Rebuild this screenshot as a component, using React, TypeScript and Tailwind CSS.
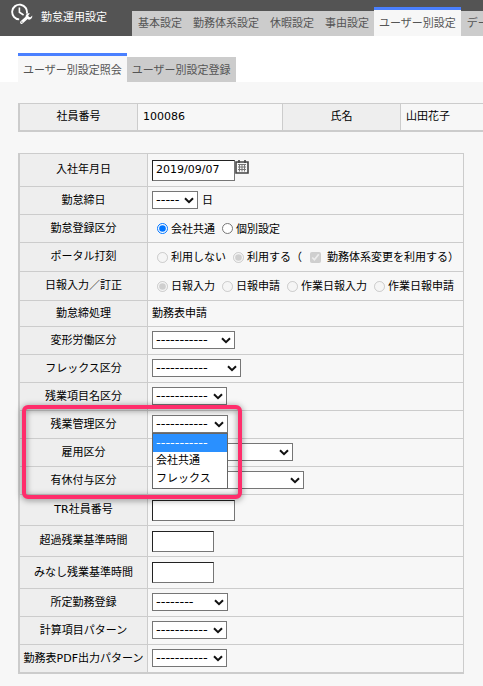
import type { ReactNode } from 'react'

type Option = string

const NAV = ['基本設定', '勤務体系設定', '休暇設定', '事由設定', 'ユーザー別設定', 'データ']
const DASHES = '-----------'

function ClockWrenchIcon() {
  return (
    <svg width="22" height="22" viewBox="0 0 22 22" fill="none" aria-hidden="true">
      <path d="M15.8 10.6 A7.4 7.4 0 1 0 8.2 16.4" stroke="#fff" strokeWidth="1.9" />
      <path d="M8.4 4.6 V9.2 L12.6 12" stroke="#fff" strokeWidth="1.6" />
      <path d="M10.6 19.4 L15.6 14.8" stroke="#fff" strokeWidth="3" strokeLinecap="round" />
      <path
        d="M18.8 10.4 L17.2 12.4 L18 14 L19.6 14.2 L21.2 12.6 C21.8 15 19.8 17.2 17.2 16.6 L15 15 C13.8 12.4 16 9.6 18.8 10.4 Z"
        fill="#fff"
      />
      <circle cx="10.9" cy="19.1" r="0.7" fill="#545454" />
    </svg>
  )
}

function CalendarIcon() {
  return (
    <svg width="14" height="14" viewBox="0 0 14 14" aria-hidden="true">
      <path d="M1 2 H13 V13 H1 Z" fill="#f7f7f7" stroke="#444" strokeWidth="1.6" />
      <path d="M4 0 V3 M10 0 V3" stroke="#444" strokeWidth="1.6" />
      <path d="M3 4.5 H11 M3 7 H11 M3 9.5 H11 M4.5 4 V11.5 M7 4 V11.5 M9.5 4 V11.5" stroke="#777" strokeWidth="1" />
    </svg>
  )
}

function Select({ id, label, width, options = [DASHES], children }: {
  id: string
  label: string
  width: string
  options?: Option[]
  children?: ReactNode
}) {
  return (
    <div className={`relative mb-0.5 ${width}`}>
      <select
        id={id}
        aria-label={label}
        className="block h-[18px] w-full appearance-none border border-[#767676] bg-white pl-[3px] text-[13px] leading-4 text-black"
      >
        {options.map(o => <option key={o}>{o}</option>)}
      </select>
      <svg className="pointer-events-none absolute top-1.5 right-1" width="10" height="7" viewBox="0 0 10 7" aria-hidden="true">
        <path d="M1 1.2 L5 5.2 L9 1.2" fill="none" stroke="#111" strokeWidth="2" />
      </svg>
      {children}
    </div>
  )
}

function TextBox({ id, width, value }: { id: string; width: string; value?: string }) {
  return (
    <input
      id={id}
      type="text"
      defaultValue={value}
      className={`block h-[21px] border border-t-[#222] border-r-[#767676] border-b-[#767676] border-l-[#222] bg-white px-[3px] pb-0.5 text-[11px] ${width}`}
    />
  )
}

function Radio({ name, label, checked, disabled }: { name: string; label: string; checked?: boolean; disabled?: boolean }) {
  return (
    <label className="flex items-center gap-[3px]">
      <input type="radio" name={name} defaultChecked={checked} disabled={disabled} className="mb-0.5 size-[11px]" />
      {label}
    </label>
  )
}

function Row({ label, htmlFor, height, marker, children }: {
  label: string
  htmlFor?: string
  height: string
  marker?: ReactNode
  children: ReactNode
}) {
  return (
    <tr className={height}>
      <th scope="row" className="relative border-r border-b border-[#ccc] bg-[#eee] p-0 text-center font-normal whitespace-nowrap">
        {htmlFor ? <label htmlFor={htmlFor}>{label}</label> : label}
        {marker}
      </th>
      <td className="border-b border-[#ccc] p-0 pl-1">{children}</td>
    </tr>
  )
}

export default function App() {
  return (
    <div className="min-h-screen overflow-hidden bg-[#f7f7f7] font-['DejaVu_Sans','Noto_Sans_CJK_JP',sans-serif] text-[11px] leading-4 text-black">
      <header className="flex h-9 items-start bg-[#545454]">
        <div className="flex w-[132px] shrink-0 items-center gap-2 pt-0.5 pl-[11px] text-white">
          <ClockWrenchIcon />
          <h1 className="pt-2 whitespace-nowrap">勤怠運用設定</h1>
        </div>
        <nav className="flex h-9 min-w-0 flex-1 items-end overflow-hidden whitespace-nowrap">
          {NAV.map(item => (
            <a
              key={item}
              href="#"
              className={
                item === 'ユーザー別設定'
                  ? 'h-[29px] shrink-0 border-t-3 border-[#4a80ff] bg-[#f7f7f7] px-[5px] pt-1.5 text-[#555]'
                  : 'h-[25px] shrink-0 bg-[#ccc] pt-[5px] pr-[5px] pl-1.5 text-[#555]'
              }
            >
              {item}
            </a>
          ))}
        </nav>
      </header>

      <div className="flex h-[46px] items-end bg-white pl-[18px] text-[#555]">
        <a href="#" className="h-[29px] border-t-3 border-[#4a80ff] bg-[#f7f7f7] px-[5px] pt-[7px] whitespace-nowrap">ユーザー別設定照会</a>
        <a href="#" className="h-[25px] bg-[#ccc] px-[5px] pt-1.5 whitespace-nowrap">ユーザー別設定登録</a>
      </div>

      <main className="pt-[21px] pl-[18px]">
        <table className="w-full table-fixed border-separate border-spacing-0 border-t border-b border-l-2 border-[#ccc]">
          <tbody>
            <tr className="h-[27px]">
              <th scope="row" className="w-[118px] border-r border-b border-[#ccc] bg-[#eee] p-0 font-normal">社員番号</th>
              <td className="w-[145px] border-r border-b border-[#ccc] p-0 pl-[5px]">100086</td>
              <th scope="row" className="w-[118px] border-r border-b border-[#ccc] bg-[#eee] p-0 font-normal">氏名</th>
              <td className="border-b border-[#ccc] p-0 pl-[5px]">山田花子</td>
            </tr>
          </tbody>
        </table>

        <div className="pt-[21px] pr-[19px] pb-3">
          <table className="w-full table-fixed border-separate border-spacing-0 border border-l-2 border-[#ccc]">
            <colgroup>
              <col className="w-[128px]" />
              <col />
            </colgroup>
            <tbody>
              <Row label="入社年月日" htmlFor="hired" height="h-[33px]">
                <div className="flex items-start">
                  <TextBox id="hired" width="w-[83px]" value="2019/09/07" />
                  <button type="button" aria-label="カレンダー"><CalendarIcon /></button>
                </div>
              </Row>
              <Row label="勤怠締日" htmlFor="closing" height="h-[28px]">
                <div className="flex items-center gap-1">
                  <Select id="closing" label="勤怠締日" width="w-[46px]" options={['-----']} />
                  日
                </div>
              </Row>
              <Row label="勤怠登録区分" height="h-[28px]">
                <div className="flex gap-[7px] pt-0.5 pl-[5px]">
                  <Radio name="register" label="会社共通" checked />
                  <Radio name="register" label="個別設定" />
                </div>
              </Row>
              <Row label="ポータル打刻" height="h-[29px]">
                <div className="flex items-center pt-0.5 pl-[5px] whitespace-nowrap">
                  <div className="flex gap-[7px]">
                    <Radio name="portal" label="利用しない" disabled />
                    <Radio name="portal" label="利用する" checked disabled />
                  </div>
                  <span>（</span>
                  <label className="flex items-center gap-1.5 pl-2">
                    <input type="checkbox" defaultChecked disabled className="mb-0.5 size-[11px]" />
                    勤務体系変更を利用する）
                  </label>
                </div>
              </Row>
              <Row label="日報入力／訂正" height="h-[29px]">
                <div className="flex gap-[7px] pt-0.5 pl-[5px] whitespace-nowrap">
                  <Radio name="daily" label="日報入力" checked disabled />
                  <Radio name="daily" label="日報申請" disabled />
                  <Radio name="daily" label="作業日報入力" disabled />
                  <Radio name="daily" label="作業日報申請" disabled />
                </div>
              </Row>
              <Row label="勤怠締処理" height="h-[26px]">勤務表申請</Row>
              <Row label="変形労働区分" htmlFor="variable" height="h-[28px]">
                <Select id="variable" label="変形労働区分" width="w-[83px]" />
              </Row>
              <Row label="フレックス区分" htmlFor="flex" height="h-[28px]">
                <Select id="flex" label="フレックス区分" width="w-[89px]" />
              </Row>
              <Row label="残業項目名区分" htmlFor="overtime-item" height="h-[28px]">
                <Select id="overtime-item" label="残業項目名区分" width="w-[75px]" />
              </Row>
              <Row
                label="残業管理区分"
                htmlFor="overtime-manage"
                height="h-[28px]"
                marker={
                  <div className="pointer-events-none absolute -top-1.5 left-0.5 z-20 h-[94px] w-[220px] rounded-md border-4 border-[#ff2d6b] drop-shadow-[0_1px_3px_rgba(0,0,0,0.5)]" />
                }
              >
                <Select id="overtime-manage" label="残業管理区分" width="w-[76px]" options={[DASHES, '会社共通', 'フレックス']}>
                  <ul className="absolute top-[18px] left-0 z-10 w-full border border-[#666] bg-white leading-[18px]">
                    <li className="bg-[#2a90ff] pl-[3px] text-[13px] leading-[18px] text-white">{DASHES}</li>
                    <li className="pl-[3px]">会社共通</li>
                    <li className="pl-[3px]">フレックス</li>
                  </ul>
                </Select>
              </Row>
              <Row label="雇用区分" htmlFor="employment" height="h-[28px]">
                <Select id="employment" label="雇用区分" width="w-[141px]" />
              </Row>
              <Row label="有休付与区分" htmlFor="paid-leave" height="h-[28px]">
                <Select id="paid-leave" label="有休付与区分" width="w-[152px]" />
              </Row>
              <Row label="TR社員番号" htmlFor="tr-number" height="h-[31px]">
                <TextBox id="tr-number" width="w-[83px]" />
              </Row>
              <Row label="超過残業基準時間" htmlFor="excess" height="h-[31px]">
                <TextBox id="excess" width="w-[62px]" />
              </Row>
              <Row label="みなし残業基準時間" htmlFor="deemed" height="h-[32px]">
                <TextBox id="deemed" width="w-[62px]" />
              </Row>
              <Row label="所定勤務登録" htmlFor="scheduled" height="h-[28px]">
                <Select id="scheduled" label="所定勤務登録" width="w-[76px]" options={['--------']} />
              </Row>
              <Row label="計算項目パターン" htmlFor="calc" height="h-[28px]">
                <Select id="calc" label="計算項目パターン" width="w-[75px]" />
              </Row>
              <Row label="勤務表PDF出力パターン" htmlFor="pdf" height="h-[28px]">
                <Select id="pdf" label="勤務表PDF出力パターン" width="w-[75px]" />
              </Row>
            </tbody>
          </table>
        </div>
      </main>
    </div>
  )
}
